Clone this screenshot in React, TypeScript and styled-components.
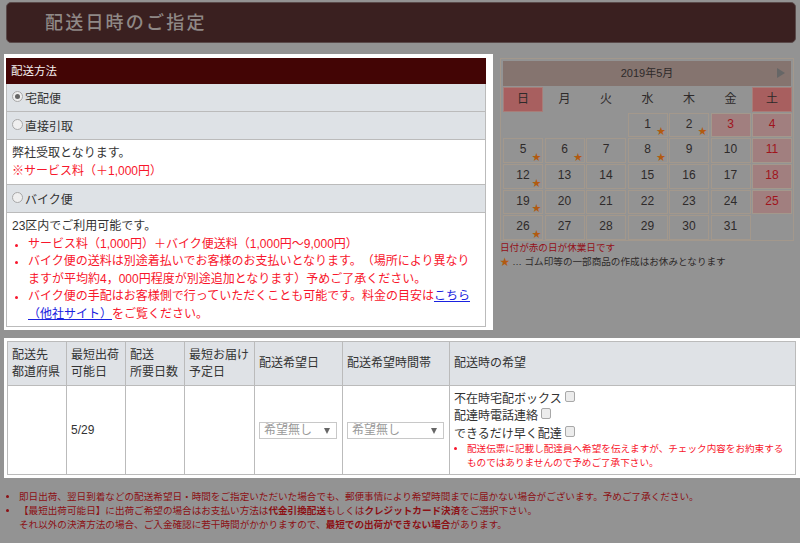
import React from 'react';
import styled, { createGlobalStyle } from 'styled-components';

const GlobalStyle = createGlobalStyle`
  html, body {
    margin: 0;
    padding: 0;
    background: #939393;
  }
  body {
    font-family: "Liberation Sans", "Noto Sans CJK JP", sans-serif;
    font-size: 12px;
    color: #333;
    text-spacing-trim: space-all;
  }
  * { box-sizing: border-box; }
`;

const Page = styled.div`
  width: 800px;
  height: 543px;
  overflow: hidden;
  padding-top: 2px;
`;

const TitleBar = styled.h1`
  margin: 0 4px 0 6px;
  height: 41px;
  padding-left: 38px;
  background: #3a2020;
  border: 1px solid #5a4a4a;
  border-radius: 5px;
  color: #8f8886;
  font-family: "Liberation Serif", "Noto Sans CJK JP", serif;
  font-size: 18px;
  font-weight: 500;
  letter-spacing: 2.2px;
  line-height: 40px;
`;

const TopRow = styled.div`
  display: flex;
  align-items: flex-start;
  margin-top: 11px;
  padding-left: 4px;
`;

const MethodPanel = styled.section`
  width: 489px;
  height: 276px;
  background: #fff;
  padding: 4px 0 0 2px;
`;

const MethodBox = styled.div`
  width: 480px;
  height: 269px;
  border: 1px solid #bbb;
  border-top: 0;
`;

const MethodHeader = styled.div`
  height: 26px;
  margin: 0 -1px;
  padding-left: 5px;
  background: #430505;
  color: #f4eeee;
  font-size: 11.5px;
  line-height: 26px;
`;

const MethodRow = styled.label<{ $height: number }>`
  display: flex;
  align-items: center;
  gap: 2px;
  height: ${p => p.$height}px;
  padding-left: 5px;
  padding-bottom: 1px;
  background: #dee2e6;
  border-bottom: 1px solid #bbb;
  font-size: 12px;
`;

const Radio = styled.span<{ $checked?: boolean }>`
  position: relative;
  flex: none;
  width: 11px;
  height: 11px;
  margin-bottom: 2px;
  border: 1px solid #a8a8a8;
  border-radius: 50%;
  background: #efefef;

  &::after {
    content: '';
    display: ${p => (p.$checked ? 'block' : 'none')};
    position: absolute;
    left: 2px;
    top: 2px;
    width: 5px;
    height: 5px;
    border-radius: 50%;
    background: #666;
  }
`;

const MethodBody = styled.div`
  padding: 5px 5px 0;
  line-height: 17.6px;
  background: #fff;
`;

const PickupBody = styled(MethodBody)`
  height: 45px;
  border-bottom: 1px solid #bbb;
`;

const Red = styled.div`
  color: #f8162c;
`;

const RedList = styled.ul`
  margin: 0 0 0 -7px;
  padding: 0 0 0 23px;
  color: #f8162c;

  li::marker { font-size: 11px; }
`;

const ExtLink = styled.a`
  color: #1a22e0;
  text-decoration: underline;
`;

const Calendar = styled.section`
  width: 294px;
  margin: 4px 0 0 7px;
`;

const CalendarBox = styled.div`
  height: 183px;
  padding: 2px;
  border: 1px solid #a3988c;
`;

const CalendarHead = styled.div`
  position: relative;
  height: 25px;
  background: #85746f;
  color: #2e2a2a;
  font-size: 11px;
  line-height: 24px;
  text-align: center;
`;

const NextArrow = styled.span`
  position: absolute;
  right: 6px;
  top: 7px;
  width: 0;
  height: 0;
  border-left: 8px solid #666;
  border-top: 5px solid transparent;
  border-bottom: 5px solid transparent;
`;

const CalendarGrid = styled.div`
  display: grid;
  grid-template-columns: repeat(7, 40px);
  grid-auto-rows: 24.7px;
  column-gap: 1.5px;
  row-gap: 1px;
  margin-top: 1px;
`;

const WeekDay = styled.div<{ $off?: boolean }>`
  background: ${p => (p.$off ? '#a85f5f' : 'transparent')};
  border: 1px solid ${p => (p.$off ? '#a87d78' : 'transparent')};
  color: #2e2a2a;
  font-size: 12px;
  line-height: 22px;
  text-align: center;
`;

const Day = styled.div<{ $off?: boolean }>`
  position: relative;
  border: 1px solid #a3988c;
  background: ${p => (p.$off ? '#a17f7f' : 'transparent')};
  color: ${p => (p.$off ? '#a0141c' : '#2e2a2a')};
  font-size: 12px;
  line-height: 20px;
  text-align: center;
`;

const Star = styled.span`
  position: absolute;
  right: 1px;
  bottom: -1px;
  color: #b25a10;
  font-size: 9px;
  line-height: 12px;
`;

const CalendarNote = styled.div<{ $red?: boolean }>`
  color: ${p => (p.$red ? '#941018' : '#2e2a2a')};
  font-size: 9.6px;
  line-height: 14px;
`;

const NoteStar = styled.span`
  color: #b25a10;
`;

const TablePanel = styled.section`
  margin: 8px 0 0 4px;
  height: 140px;
  padding: 3px 4px 3px 3px;
  background: #fff;
`;

const OrderTable = styled.table`
  width: 789px;
  height: 134px;
  table-layout: fixed;
  border-collapse: collapse;
`;

const Th = styled.th`
  height: 44px;
  padding: 0 4px;
  background: #dfe2e6;
  border: 1px solid #bbb;
  font-size: 12px;
  font-weight: 400;
  line-height: 17px;
  text-align: left;
  vertical-align: middle;
  white-space: nowrap;
`;

const Td = styled.td`
  padding: 0 4px;
  border: 1px solid #bbb;
  font-size: 12px;
  line-height: 17px;
  vertical-align: middle;
`;

const Select = styled.div<{ $width: number }>`
  display: flex;
  justify-content: space-between;
  align-items: center;
  width: ${p => p.$width}px;
  height: 17px;
  margin-top: 1px;
  padding: 0 6px 0 4px;
  border: 1px solid #c8c8c8;
  color: #999;
  font-size: 12px;

  &::after {
    content: '';
    border-top: 6px solid #666;
    border-left: 3px solid transparent;
    border-right: 3px solid transparent;
  }
`;

const WishRow = styled.label`
  display: flex;
  align-items: flex-start;
  gap: 3px;
  height: 17.5px;
  padding-top: 1px;
  font-size: 12px;
`;

const CheckBox = styled.span`
  width: 10px;
  height: 11px;
  border: 1px solid #a8a8a8;
  border-radius: 2px;
  background: #ececec;
`;

const WishList = styled.ul`
  margin: 0;
  padding: 0 5px 0 13px;
  color: #f8162c;
  font-size: 9.6px;
  line-height: 14px;
`;

const Notes = styled.ul`
  margin: 12px 0 0;
  padding: 0 0 0 19px;
  color: #8c1014;
  font-size: 9.6px;
  line-height: 14px;

  b { font-weight: 700; }
`;

const weekDays = ['日', '月', '火', '水', '木', '金', '土'];

interface CalDay {
  n: number;
  star?: boolean;
  off?: boolean;
}

const days: CalDay[] = Array.from({ length: 31 }, (_, i) => {
  const n = i + 1;
  return {
    n,
    star: [1, 2, 5, 6, 8, 12, 19, 26].includes(n),
    off: n === 3 || n === 4 || n === 11 || n === 18 || n === 25,
  };
});

export default function App() {
  return (
    <Page>
      <GlobalStyle />
      <TitleBar>配送日時のご指定</TitleBar>
      <TopRow>
        <MethodPanel>
          <MethodBox>
            <MethodHeader>配送方法</MethodHeader>
            <MethodRow $height={28}><Radio $checked />宅配便</MethodRow>
            <MethodRow $height={28}><Radio />直接引取</MethodRow>
            <PickupBody>
              弊社受取となります。
              <Red>※サービス料（＋1,000円）</Red>
            </PickupBody>
            <MethodRow $height={28}><Radio />バイク便</MethodRow>
            <MethodBody>
              23区内でご利用可能です。
              <RedList>
                <li>サービス料（1,000円）＋バイク便送料（1,000円～9,000円）</li>
                <li>バイク便の送料は別途着払いでお客様のお支払いとなります。（場所により異なりますが平均約4，000円程度が別途追加となります）予めご了承ください。</li>
                <li>バイク便の手配はお客様側で行っていただくことも可能です。料金の目安は<ExtLink href="#">こちら（他社サイト）</ExtLink>をご覧ください。</li>
              </RedList>
            </MethodBody>
          </MethodBox>
        </MethodPanel>
        <Calendar>
          <CalendarBox>
            <CalendarHead>2019年5月<NextArrow /></CalendarHead>
            <CalendarGrid>
              {weekDays.map((d, i) => (
                <WeekDay key={d} $off={i === 0 || i === 6}>{d}</WeekDay>
              ))}
              {[0, 1, 2].map(i => <span key={i} />)}
              {days.map(d => (
                <Day key={d.n} $off={d.off}>
                  {d.n}
                  {d.star && <Star>★</Star>}
                </Day>
              ))}
            </CalendarGrid>
          </CalendarBox>
          <CalendarNote $red>日付が赤の日が休業日です</CalendarNote>
          <CalendarNote><NoteStar>★</NoteStar> … ゴム印等の一部商品の作成はお休みとなります</CalendarNote>
        </Calendar>
      </TopRow>
      <TablePanel>
        <OrderTable>
          <colgroup>
            <col style={{ width: 59 }} />
            <col style={{ width: 59 }} />
            <col style={{ width: 59 }} />
            <col style={{ width: 70 }} />
            <col style={{ width: 88 }} />
            <col style={{ width: 107 }} />
            <col />
          </colgroup>
          <thead>
            <tr>
              <Th>配送先<br />都道府県</Th>
              <Th>最短出荷<br />可能日</Th>
              <Th>配送<br />所要日数</Th>
              <Th>最短お届け<br />予定日</Th>
              <Th>配送希望日</Th>
              <Th>配送希望時間帯</Th>
              <Th>配送時の希望</Th>
            </tr>
          </thead>
          <tbody>
            <tr>
              <Td />
              <Td>5/29</Td>
              <Td />
              <Td />
              <Td><Select $width={78}>希望無し</Select></Td>
              <Td><Select $width={97}>希望無し</Select></Td>
              <Td>
                <WishRow>不在時宅配ボックス<CheckBox /></WishRow>
                <WishRow>配達時電話連絡<CheckBox /></WishRow>
                <WishRow>できるだけ早く配達<CheckBox /></WishRow>
                <WishList>
                  <li>配送伝票に記載し配達員へ希望を伝えますが、チェック内容をお約束するものではありませんので予めご了承下さい。</li>
                </WishList>
              </Td>
            </tr>
          </tbody>
        </OrderTable>
      </TablePanel>
      <Notes>
        <li>即日出荷、翌日到着などの配送希望日・時間をご指定いただいた場合でも、郵便事情により希望時間までに届かない場合がございます。予めご了承ください。</li>
        <li>【最短出荷可能日】に出荷ご希望の場合はお支払い方法は<b>代金引換配送</b>もしくは<b>クレジットカード決済</b>をご選択下さい。<br />それ以外の決済方法の場合、ご入金確認に若干時間がかかりますので、<b>最短での出荷ができない場合</b>があります。</li>
      </Notes>
    </Page>
  );
}
